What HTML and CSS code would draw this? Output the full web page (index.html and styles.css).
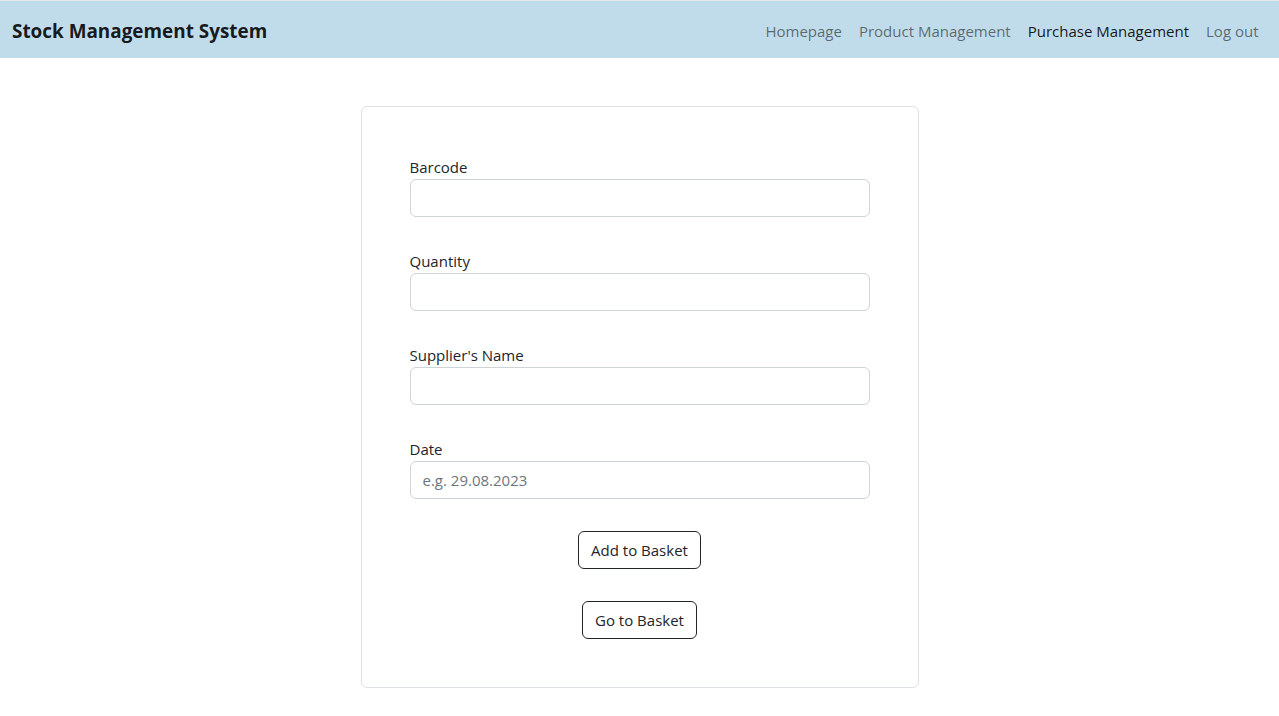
FILE: index.html
```html
<!DOCTYPE html>
<html lang="en">
<head>
<meta charset="utf-8">
<title>Stock Management System</title>
<link rel="stylesheet" href="styles.css">
</head>
<body>
<div class="topline"></div>
<nav class="navbar">
  <a class="brand" href="#">Stock Management System</a>
  <ul class="nav">
    <li><a class="nav-link" href="#">Homepage</a></li>
    <li><a class="nav-link" href="#">Product Management</a></li>
    <li><a class="nav-link active" href="#">Purchase Management</a></li>
    <li><a class="nav-link" href="#">Log out</a></li>
  </ul>
</nav>
<main class="main">
  <form class="card">
    <div class="group">
      <label class="label" for="barcode">Barcode</label>
      <input class="input" id="barcode" type="text">
    </div>
    <div class="group">
      <label class="label" for="qty">Quantity</label>
      <input class="input" id="qty" type="text">
    </div>
    <div class="group">
      <label class="label" for="supplier">Supplier's Name</label>
      <input class="input" id="supplier" type="text">
    </div>
    <div class="group">
      <label class="label" for="date">Date</label>
      <input class="input" id="date" type="text" placeholder="e.g. 29.08.2023">
    </div>
    <div class="actions">
      <button class="btn" type="button">Add to Basket</button>
      <button class="btn" type="button">Go to Basket</button>
    </div>
  </form>
</main>
</body>
</html>
```
FILE: styles.css
```css
* { box-sizing: border-box; }
html, body { margin: 0; padding: 0; }
body {
  font-family: "Open Sans", "Noto Sans", "Liberation Sans", sans-serif;
  font-size: 15px;
  line-height: 24px;
  color: #212529;
  background: #fff;
}
.topline { height: 1px; background: #e6e8ea; }
.navbar {
  height: 57px;
  background: #c0dcea;
  display: flex;
  align-items: center;
  justify-content: space-between;
  padding: 3px 12px 0;
}
.brand {
  font-weight: 700;
  font-size: 18.9px;
  color: rgba(0,0,0,0.9);
  text-decoration: none;
  line-height: 30px;
}
.nav {
  list-style: none;
  margin: 0;
  padding: 0;
  display: flex;
}
.nav-link {
  display: block;
  padding: 8px 8.5px;
  color: rgba(0,0,0,0.55);
  text-decoration: none;
}
.nav-link.active { color: rgba(0,0,0,0.9); }
.main {
  display: flex;
  justify-content: center;
  padding-top: 48px;
}
.card {
  width: 558px;
  border: 1px solid #dee2e6;
  border-radius: 6px;
  padding: 48px 48px;
  display: flex;
  flex-direction: column;
  gap: 32px;
}
.group { display: flex; flex-direction: column; }
.label { display: block; }
.input {
  height: 38px;
  width: 100%;
  border: 1px solid #ced4da;
  border-radius: 6px;
  padding: 6px 12px;
  font: inherit;
  color: #212529;
  background: #fff;
}
.input::placeholder { color: #6c757d; opacity: 1; }
.actions {
  display: flex;
  flex-direction: column;
  align-items: center;
  gap: 32px;
}
.btn {
  height: 38px;
  padding: 6px 12px;
  font: inherit;
  color: #212529;
  background: #fff;
  border: 1px solid #212529;
  border-radius: 6px;
  cursor: pointer;
}
```
